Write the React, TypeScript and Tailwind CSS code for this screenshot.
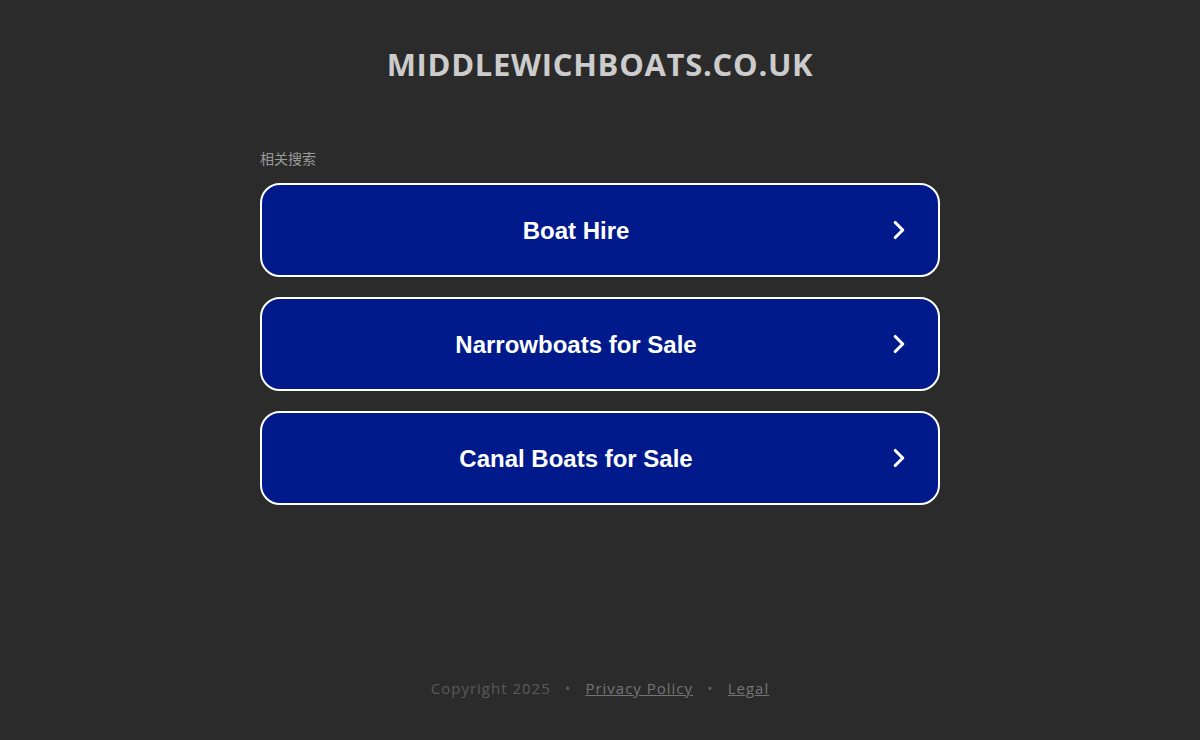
import { ChevronRight } from 'lucide-react';

const links = ['Boat Hire', 'Narrowboats for Sale', 'Canal Boats for Sale'];

export default function App() {
  return (
    <div className="min-h-[740px] bg-[#2b2b2b] flex flex-col items-center font-['Open_Sans',sans-serif]">
      {/* Domain title */}
      <h1 className="mt-[44px] text-[31px] leading-[40px] font-bold text-[#cccccc] tracking-[0.7px]">
        MIDDLEWICHBOATS.CO.UK
      </h1>

      {/* Related searches */}
      <div className="w-[680px] mt-[65px]">
        <p className="text-[14px] leading-[18px] text-[#9a9a9a] font-['Noto_Sans_CJK_SC',sans-serif]">相关搜索</p>
        <div className="mt-[16px] flex flex-col gap-[20px]">
          {links.map((label) => (
            <a
              key={label}
              href="#"
              className="h-[94px] rounded-[20px] border-2 border-white bg-[#001a8b] flex items-center pl-[6px] pr-[24px] text-white"
            >
              <span className="flex-1 text-center text-[24px] leading-[30px] pt-[1px] font-bold font-['Liberation_Sans',Arial,sans-serif]">
                {label}
              </span>
              <ChevronRight className="w-[30px] h-[30px]" strokeWidth={2.5} />
            </a>
          ))}
        </div>
      </div>

      {/* Footer */}
      <footer className="mt-auto mb-[41px] flex items-center gap-[14px] text-[15px] text-[#5a5a5a] tracking-[1px]">
        <span>Copyright 2025</span>
        <span>•</span>
        <a href="#" className="underline text-[#747474]">Privacy Policy</a>
        <span>•</span>
        <a href="#" className="underline text-[#747474]">Legal</a>
      </footer>
    </div>
  );
}
